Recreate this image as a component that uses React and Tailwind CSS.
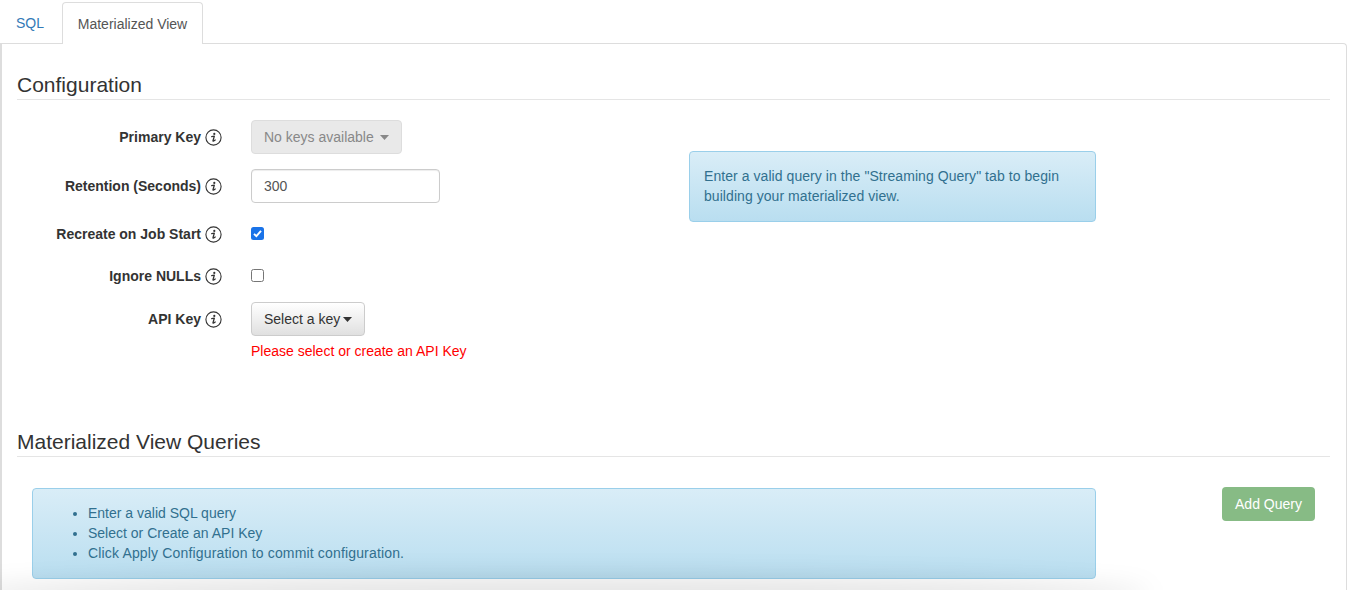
const Info = () => (
  <svg width="17" height="17" viewBox="0 0 17 17" className="shrink-0">
    <circle cx="8.5" cy="8.5" r="7.6" fill="none" stroke="#333" strokeWidth="1.1" />
    <circle cx="9.3" cy="4.9" r="1.1" fill="#333" />
    <path d="M6.7 7.6 L9.3 7.2 L8 11.6 Q7.9 12.4 8.7 12 L10.2 11" fill="none" stroke="#333" strokeWidth="1.3" strokeLinecap="round" strokeLinejoin="round" />
  </svg>
);

const Caret = ({ color }) => (
  <svg width="9" height="5" viewBox="0 0 9 5" className="inline-block shrink-0">
    <path d="M0 0 H9 L4.5 5 Z" fill={color} />
  </svg>
);

const Label = ({ children }) => (
  <div className="w-[205px] flex items-center justify-end gap-[4px] shrink-0 font-bold text-[#333]">
    <span>{children}</span>
    <Info />
  </div>
);

const Alert = ({ className, children }) => (
  <div className={`rounded-[4px] border border-[#9acfea] bg-gradient-to-b from-[#d9edf7] to-[#b9def0] text-[#31708f] ${className}`}>
    {children}
  </div>
);

export default function App() {
  return (
    <div className="relative h-[590px] w-[1347px] overflow-hidden bg-white text-[14px] leading-[20px] text-[#333] [font-family:'Liberation_Sans',Arial,sans-serif]">
      <div className="relative flex h-[43px] items-end pt-[2px]">
        <div className="flex h-[41px] w-[62px] items-center justify-center pr-[2px] text-[#337ab7]">SQL</div>
        <div className="relative z-10 -mb-px flex h-[42px] w-[141px] items-center justify-center rounded-t-[4px] border border-b-0 border-[#ddd] bg-white text-[#555]">
          Materialized View
        </div>
      </div>

      <div className="h-[547px] rounded-tr-[4px] border-t border-r border-l-2 border-[#ddd] pl-[15px] pr-[16px]">
        <h2 className="mt-[24px] h-[32px] border-b border-[#e5e5e5] text-[21px] leading-[34px] text-[#333]">Configuration</h2>

        <div className="flex">
          <div className="w-[672px] shrink-0">
            <div className="mt-[20px] flex h-[34px] items-center">
              <Label>Primary Key</Label>
              <div className="ml-[29px] flex h-[34px] w-[151px] items-center justify-between whitespace-nowrap rounded-[4px] border border-[#ddd] bg-[#e9e9e9] px-[12px] text-[#888]">
                <span>No keys available</span>
                <Caret color="#888" />
              </div>
            </div>
            <div className="mt-[15px] flex h-[34px] items-center">
              <Label>Retention (Seconds)</Label>
              <div className="ml-[29px] flex h-[34px] w-[189px] items-center rounded-[4px] border border-[#ccc] bg-white px-[12px] text-[#555] shadow-[inset_0_1px_1px_rgba(0,0,0,0.075)]">
                300
              </div>
            </div>
            <div className="mt-[21px] flex h-[20px] items-center">
              <Label>Recreate on Job Start</Label>
              <div className="ml-[29px] -mt-[2px] flex h-[13px] w-[13px] items-center justify-center rounded-[2.5px] bg-[#1a73e8]">
                <svg width="11" height="11" viewBox="0 0 11 11">
                  <path d="M2 5.8 L4.4 8.2 L9 2.8" fill="none" stroke="white" strokeWidth="1.9" />
                </svg>
              </div>
            </div>
            <div className="mt-[22px] flex h-[20px] items-center">
              <Label>Ignore NULLs</Label>
              <div className="ml-[29px] -mt-[2px] h-[13px] w-[13px] rounded-[2.5px] border border-[#767676] bg-white" />
            </div>
            <div className="mt-[16px] flex h-[34px] items-center">
              <Label>API Key</Label>
              <div className="ml-[29px] flex h-[34px] w-[114px] items-center justify-between whitespace-nowrap rounded-[4px] border border-[#ccc] bg-gradient-to-b from-white to-[#e0e0e0] px-[12px] text-[#333]">
                <span>Select a key</span>
                <Caret color="#333" />
              </div>
            </div>
            <div className="ml-[234px] mt-[5px] text-[#f00]">Please select or create an API Key</div>
          </div>
          <Alert className="mt-[51px] h-[71px] w-[407px] px-[14px] py-[14px] tracking-[0.06px]">
            Enter a valid query in the "Streaming Query" tab to begin building your materialized view.
          </Alert>
        </div>

        <h2 className="mt-[64px] h-[32px] border-b border-[#e5e5e5] text-[21px] leading-[34px] text-[#333]">Materialized View Queries</h2>

        <div className="flex items-start">
          <Alert className="ml-[15px] mt-[31px] h-[91px] w-[1064px] px-[15px] py-[14px]">
            <ul className="list-disc pl-[40px]">
              <li>Enter a valid SQL query</li>
              <li>Select or Create an API Key</li>
              <li className="tracking-[0.16px]">Click Apply Configuration to commit configuration.</li>
            </ul>
          </Alert>
          <div className="ml-[126px] mt-[30px] flex h-[34px] w-[93px] items-center justify-center rounded-[4px] bg-[#87bb85] text-white">
            Add Query
          </div>
        </div>
      </div>

      <div className="pointer-events-none absolute bottom-[-22px] left-[-40px] h-[36px] w-[1190px] rounded-[50%] bg-black/10 blur-[12px]" />
    </div>
  );
}
